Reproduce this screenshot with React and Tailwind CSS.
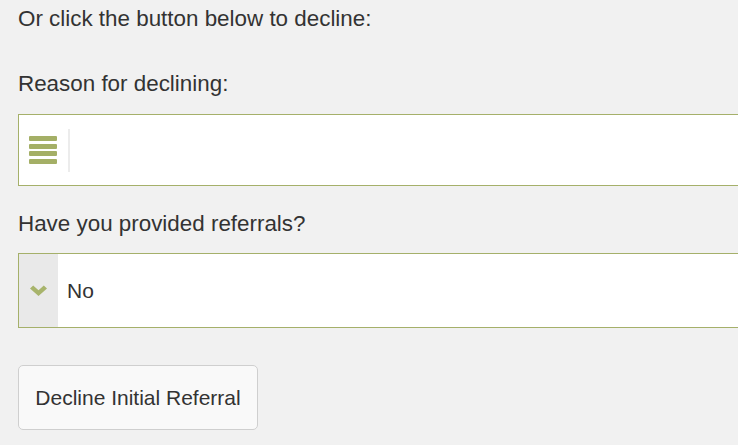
import React from "react";

export default function App() {
  return (
    <div
      className="min-h-[445px] w-[738px] overflow-hidden bg-[#f1f1f1] pl-[18px] pt-[3px] text-[#333]"
      style={{ fontFamily: '"Liberation Sans", Arial, sans-serif' }}
    >
      <p className="text-[22.4px] leading-[32px] whitespace-nowrap">
        Or click the button below to decline:
      </p>

      <p className="mt-[33px] text-[22.4px] leading-[32px]">
        Reason for declining:
      </p>

      {/* Reason input */}
      <div className="mt-[14px] flex h-[72px] w-[740px] items-center border border-[#a5b06a] bg-white">
        <div className="ml-[10px] flex w-[28px] flex-col gap-[2.5px]">
          <span className="h-[5px] rounded-[1px] bg-[#a4af66]" />
          <span className="h-[5px] rounded-[1px] bg-[#a4af66]" />
          <span className="h-[5px] rounded-[1px] bg-[#a4af66]" />
          <span className="h-[5px] rounded-[1px] bg-[#a4af66]" />
        </div>
        <div className="ml-[11px] h-[43px] w-[2px] bg-[#ececec]" />
      </div>

      <p className="mt-[22px] text-[22.4px] leading-[32px]">
        Have you provided referrals?
      </p>

      {/* Referrals select */}
      <div className="mt-[13px] flex h-[75px] w-[740px] items-stretch border border-[#a5b06a] bg-white">
        <div className="flex w-[39px] items-center justify-center bg-[#e9e9e9]">
          <svg width="17" height="11" viewBox="0 0 17 11">
            <path
              d="M0 3.5 L3.2 0.5 L8.5 5.2 L13.8 0.5 L17 3.5 L8.5 11 Z"
              fill="#a8b46c"
            />
          </svg>
        </div>
        <div className="flex items-center pl-[9px] text-[21px]">No</div>
      </div>

      <button className="mt-[37px] h-[65px] w-[240px] rounded-[5px] border border-[#cfcfcf] bg-[#f9f9f9] text-[21px] text-[#333]">
        Decline Initial Referral
      </button>
    </div>
  );
}
